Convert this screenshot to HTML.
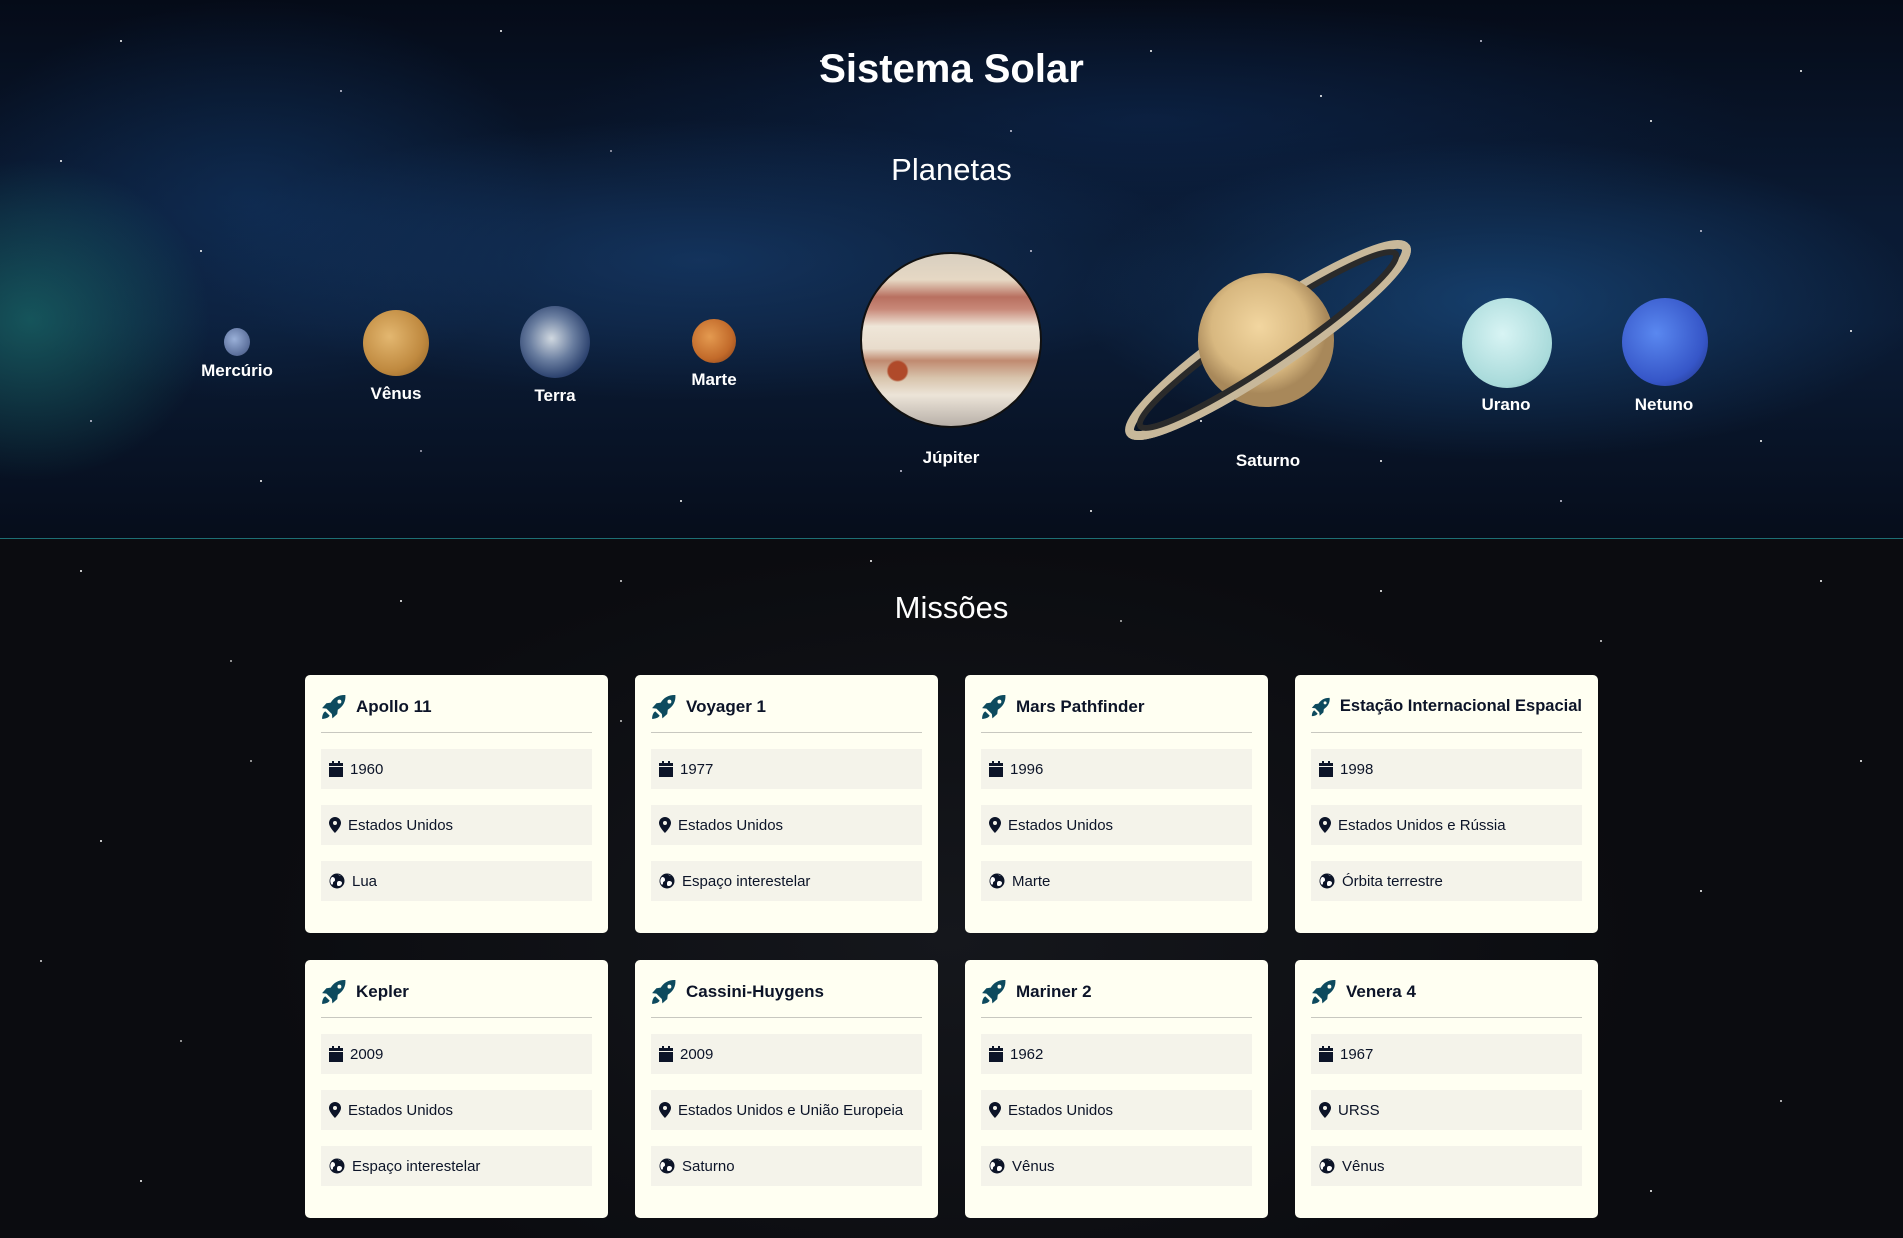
<!DOCTYPE html>
<html><head><meta charset="utf-8"><style>
*{margin:0;padding:0;box-sizing:border-box}
body{width:1903px;height:1238px;overflow:hidden;font-family:"Liberation Sans",sans-serif;background:#0b0c10;position:relative}
#top{position:absolute;left:0;top:0;width:1903px;height:539px;overflow:hidden;
background:
radial-gradient(ellipse 180px 160px at 30px 320px,rgba(30,130,120,.55),transparent),
radial-gradient(ellipse 500px 140px at 700px 260px,rgba(30,80,140,.45),transparent),
radial-gradient(ellipse 420px 160px at 1500px 300px,rgba(30,90,150,.55),transparent),
radial-gradient(ellipse 300px 200px at 250px 200px,rgba(20,60,110,.5),transparent),
radial-gradient(ellipse 600px 120px at 1150px 120px,rgba(15,45,90,.5),transparent),
linear-gradient(#050b18 0%,#0a1a33 40%,#0b1c36 60%,#060d1b 100%);
border-bottom:1px solid #1d6e74}
#bot{position:absolute;left:0;top:540px;width:1903px;height:698px;
background:radial-gradient(ellipse 700px 400px at 950px 400px,#15171c,transparent),#0b0c10}
.stars{position:absolute;left:0;top:0;width:2px;height:2px;border-radius:50%;background:transparent}
h1{position:absolute;top:47px;width:100%;text-align:center;color:#fff;font-size:40px;font-weight:bold}
h2{position:absolute;width:100%;text-align:center;color:#fff;font-size:31px;font-weight:normal}
.pl{position:absolute;border-radius:50%}
.lb{position:absolute;color:#fff;font-weight:bold;font-size:17px;transform:translateX(-50%);white-space:nowrap}
.card{position:absolute;width:303px;height:258px;background:#fffff2;border-radius:5px;padding:0 16px}
.ct{height:58px;border-bottom:1px solid #c8c8c0;display:flex;align-items:center;padding-top:6px;font-weight:bold;font-size:17px;color:#0c1428}
.ct svg{margin-right:9px}
.it{height:40px;background:#f4f3ea;margin-top:16px;display:flex;align-items:center;padding-left:8px;font-size:15px;color:#0c1428}
.it svg{margin-right:7px}
</style></head><body>
<div id="top">
<div class="stars" style="box-shadow:120px 40px #fff,340px 90px #ccd,500px 30px #fff,610px 150px #aab,820px 60px #fff,1010px 130px #ccd,1150px 50px #fff,1320px 95px #fff,1480px 40px #ccd,1650px 120px #fff,1800px 70px #fff,90px 420px #ccd,260px 480px #fff,420px 450px #aab,680px 500px #fff,900px 470px #ccd,1090px 510px #fff,1380px 460px #fff,1560px 500px #ccd,1760px 440px #fff,200px 250px #fff,1700px 230px #ccd,1850px 330px #fff,60px 160px #fff,1030px 250px #ccd,1200px 420px #fff"></div>
<h1>Sistema Solar</h1>
<h2 style="top:152px">Planetas</h2>
<div class="pl" style="left:224px;top:328px;width:26px;height:28px;background:radial-gradient(circle at 40% 40%,#9ab0d8,#5a6e9a 70%,#4a4a55)"></div>
<div class="lb" style="left:237px;top:361px">Mercúrio</div>
<div class="pl" style="left:363px;top:310px;width:66px;height:66px;background:radial-gradient(circle at 40% 40%,#e3b770,#c08a40 60%,#8a5c22)"></div>
<div class="lb" style="left:396px;top:384px">Vênus</div>
<div class="pl" style="left:520px;top:306px;width:70px;height:72px;background:radial-gradient(circle at 45% 45%,#d0d8e0,#6a7ea0 40%,#2e4470 70%,#1a2240)"></div>
<div class="lb" style="left:555px;top:386px">Terra</div>
<div class="pl" style="left:692px;top:319px;width:44px;height:44px;background:radial-gradient(circle at 40% 40%,#e49a50,#c26a2a 60%,#7a3a18)"></div>
<div class="lb" style="left:714px;top:370px">Marte</div>
<div class="pl" style="left:860px;top:252px;width:182px;height:176px;border:2px solid #111;background:radial-gradient(circle at 20% 68%,#b04a2a 5%,transparent 6%),linear-gradient(#d8cfc0 0%,#e6d8c4 15%,#b87060 25%,#c88878 32%,#efe6d8 42%,#e8dccc 55%,#c08a70 62%,#d8c4ac 72%,#ece4d8 82%,#b8b0a8 100%)"></div>
<div class="lb" style="left:951px;top:448px">Júpiter</div>
<svg style="position:absolute;left:1110px;top:230px" width="320" height="220" viewBox="1110 230 320 220">
<g transform="rotate(-34 1268 340)">
<ellipse cx="1268" cy="340" rx="166" ry="28" fill="none" stroke="#c8b89a" stroke-width="9"/>
<ellipse cx="1268" cy="340" rx="154" ry="22" fill="none" stroke="#2a2a2a" stroke-width="6"/>
</g>
<defs><radialGradient id="sg" cx="45%" cy="40%"><stop offset="0" stop-color="#f2d6a0"/><stop offset=".7" stop-color="#d8b880"/><stop offset="1" stop-color="#a8885a"/></radialGradient></defs>
<ellipse cx="1266" cy="340" rx="68" ry="67" fill="url(#sg)"/>
<g transform="rotate(-34 1268 340)"><path d="M1102 340 A166 28 0 0 0 1434 340" fill="none" stroke="#c8b89a" stroke-width="9"/><path d="M1114 340 A154 22 0 0 0 1422 340" fill="none" stroke="#2a2a2a" stroke-width="6"/></g>
</svg>
<div class="lb" style="left:1268px;top:451px">Saturno</div>
<div class="pl" style="left:1462px;top:298px;width:90px;height:90px;background:radial-gradient(circle at 45% 40%,#d8f4f4,#a8dada 70%,#6a9a9a)"></div>
<div class="lb" style="left:1506px;top:395px">Urano</div>
<div class="pl" style="left:1622px;top:298px;width:86px;height:88px;background:radial-gradient(circle at 40% 40%,#5a88f0,#3656c8 65%,#1a2a70)"></div>
<div class="lb" style="left:1664px;top:395px">Netuno</div>
</div>
<div id="bot">
<div class="stars" style="box-shadow:80px 30px #fff,230px 120px #bbb,400px 60px #fff,620px 40px #ddd,870px 20px #fff,1120px 80px #bbb,1380px 50px #fff,1600px 100px #ddd,1820px 40px #fff,100px 300px #fff,180px 500px #bbb,140px 640px #fff,1700px 350px #fff,1780px 560px #ddd,1650px 650px #fff,620px 180px #ccc,1240px 160px #fff,40px 420px #ddd,1860px 220px #fff,250px 220px #bbb"></div>
</div>
<h2 style="top:590px">Missões</h2>

<svg width="0" height="0" style="position:absolute"><defs>
<symbol id="rk" viewBox="0 0 24 24"><path fill="#0d4a5e" d="M23 1c-6-.5-11 2-14 7l-4 .5L1 13l4 .5 5 5 .5 4 4.5-4 .5-4c5-3 7.5-8 7-13.5zM17 5.2a1.8 1.8 0 1 1 0 3.6 1.8 1.8 0 0 1 0-3.6zM4 16c-2 1-3 4-3 7 3 0 6-1 7-3z"/></symbol>
<symbol id="cal" viewBox="0 0 14 16"><path fill="#0c1428" d="M3 0h2v2h4V0h2v2h3v3H0V2h3zM0 6h14v10H0z"/></symbol>
<symbol id="pin" viewBox="0 0 12 16"><path fill="#0c1428" d="M6 0a6 6 0 0 0-6 6c0 4 6 10 6 10s6-6 6-10a6 6 0 0 0-6-6zm0 4a2 2 0 1 1 0 4 2 2 0 0 1 0-4z"/></symbol>
<symbol id="gl" viewBox="0 0 16 16"><circle cx="8" cy="8" r="7.5" fill="#0c1428"/><path fill="#fff" d="M3 4c2 0 3 1 3 3s-2 1-2 3-1 2-2 1C1 8 1 6 3 4zm7 4c2 0 3 1 3 2s-1 3-3 3-2-1-2-2 0-3 2-3zM9 1.5c1 1 2 1 3 1"/></symbol>
</defs></svg>

<div class="card" style="left:305px;top:675px"><div class="ct"><svg width="26" height="26"><use href="#rk"/></svg>Apollo 11</div><div class="it"><svg width="14" height="16"><use href="#cal"/></svg>1960</div><div class="it"><svg width="12" height="16"><use href="#pin"/></svg>Estados Unidos</div><div class="it"><svg width="16" height="16"><use href="#gl"/></svg>Lua</div></div>
<div class="card" style="left:635px;top:675px"><div class="ct"><svg width="26" height="26"><use href="#rk"/></svg>Voyager 1</div><div class="it"><svg width="14" height="16"><use href="#cal"/></svg>1977</div><div class="it"><svg width="12" height="16"><use href="#pin"/></svg>Estados Unidos</div><div class="it"><svg width="16" height="16"><use href="#gl"/></svg>Espaço interestelar</div></div>
<div class="card" style="left:965px;top:675px"><div class="ct"><svg width="26" height="26"><use href="#rk"/></svg>Mars Pathfinder</div><div class="it"><svg width="14" height="16"><use href="#cal"/></svg>1996</div><div class="it"><svg width="12" height="16"><use href="#pin"/></svg>Estados Unidos</div><div class="it"><svg width="16" height="16"><use href="#gl"/></svg>Marte</div></div>
<div class="card" style="left:1295px;top:675px"><div class="ct" style="font-size:16.5px;white-space:nowrap"><svg width="26" height="26"><use href="#rk"/></svg>Estação Internacional Espacial</div><div class="it"><svg width="14" height="16"><use href="#cal"/></svg>1998</div><div class="it"><svg width="12" height="16"><use href="#pin"/></svg>Estados Unidos e Rússia</div><div class="it"><svg width="16" height="16"><use href="#gl"/></svg>Órbita terrestre</div></div>

<div class="card" style="left:305px;top:960px"><div class="ct"><svg width="26" height="26"><use href="#rk"/></svg>Kepler</div><div class="it"><svg width="14" height="16"><use href="#cal"/></svg>2009</div><div class="it"><svg width="12" height="16"><use href="#pin"/></svg>Estados Unidos</div><div class="it"><svg width="16" height="16"><use href="#gl"/></svg>Espaço interestelar</div></div>
<div class="card" style="left:635px;top:960px"><div class="ct"><svg width="26" height="26"><use href="#rk"/></svg>Cassini-Huygens</div><div class="it"><svg width="14" height="16"><use href="#cal"/></svg>2009</div><div class="it"><svg width="12" height="16"><use href="#pin"/></svg>Estados Unidos e União Europeia</div><div class="it"><svg width="16" height="16"><use href="#gl"/></svg>Saturno</div></div>
<div class="card" style="left:965px;top:960px"><div class="ct"><svg width="26" height="26"><use href="#rk"/></svg>Mariner 2</div><div class="it"><svg width="14" height="16"><use href="#cal"/></svg>1962</div><div class="it"><svg width="12" height="16"><use href="#pin"/></svg>Estados Unidos</div><div class="it"><svg width="16" height="16"><use href="#gl"/></svg>Vênus</div></div>
<div class="card" style="left:1295px;top:960px"><div class="ct"><svg width="26" height="26"><use href="#rk"/></svg>Venera 4</div><div class="it"><svg width="14" height="16"><use href="#cal"/></svg>1967</div><div class="it"><svg width="12" height="16"><use href="#pin"/></svg>URSS</div><div class="it"><svg width="16" height="16"><use href="#gl"/></svg>Vênus</div></div>
</body></html>
